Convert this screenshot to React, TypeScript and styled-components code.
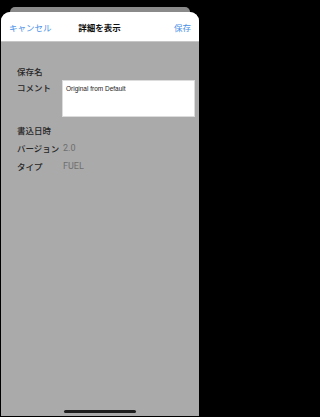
import React from 'react';
import styled, { createGlobalStyle } from 'styled-components';

const GlobalStyle = createGlobalStyle`
  html, body {
    margin: 0;
    padding: 0;
    background: #000;
  }
  body {
    font-family: 'Noto Sans CJK JP', 'Noto Sans', sans-serif;
  }
`;

const Screen = styled.div`
  width: 200px;
  height: 417px;
  background: #000;
  display: flex;
  flex-direction: column;
  padding-top: 7px;
  box-sizing: border-box;
  overflow: hidden;
`;

const BackCard = styled.div`
  height: 5px;
  margin: 0 10px;
  background: #8a8a8a;
  border-radius: 7px 7px 0 0;
  flex-shrink: 0;
`;

const Sheet = styled.div`
  flex: 1;
  margin: 0 1px 1px;
  background: #aaaaaa;
  border-radius: 9px 9px 0 0;
  overflow: hidden;
  display: flex;
  flex-direction: column;
`;

const NavBar = styled.div`
  height: 30px;
  box-sizing: border-box;
  background: #fff;
  border-bottom: 1px solid #c6c6c6;
  display: grid;
  grid-template-columns: 1fr auto 1fr;
  align-items: center;
  padding: 2px 8px 0 8px;
  flex-shrink: 0;
`;

const NavButton = styled.span<{ $align: 'left' | 'right' }>`
  font-size: 8.5px;
  color: #4a90e8;
  justify-self: ${(p) => (p.$align === 'left' ? 'start' : 'end')};
  line-height: 1;
`;

const NavTitle = styled.span`
  font-size: 8.5px;
  font-weight: 700;
  color: #111;
  line-height: 1;
  margin-right: 1px;
`;

const Content = styled.div`
  flex: 1;
  display: flex;
  flex-direction: column;
  padding: 25px 4px 0 16px;
  gap: 9px;
`;

const Row = styled.div<{ $top?: number }>`
  display: flex;
  align-items: flex-start;
  margin-top: ${(p) => p.$top ?? 0}px;
`;

const Label = styled.span`
  width: 45px;
  flex-shrink: 0;
  font-size: 8.5px;
  font-weight: 500;
  color: #262626;
  line-height: 9px;
  white-space: nowrap;
`;

const Value = styled.span`
  margin-left: 1px;
  font-size: 9px;
  color: #6e6e6e;
  line-height: 9px;
  font-family: 'Roboto', 'Noto Sans', sans-serif;
`;

const Comment = styled.div`
  flex: 1;
  height: 37px;
  margin-top: -3px;
  box-sizing: border-box;
  background: #fff;
  border: 1px solid #dcdcdc;
  padding: 4px 3px;
  font-family: 'Liberation Sans', Arial, sans-serif;
  font-size: 6.5px;
  color: #222;
  line-height: 1.2;
`;

const HomeBar = styled.div`
  width: 72px;
  height: 3px;
  border-radius: 2px;
  background: #1e1e1e;
  align-self: center;
  margin: auto 0 3px -12px;
`;

export default function App() {
  return (
    <>
      <GlobalStyle />
      <Screen>
        <BackCard />
        <Sheet>
          <NavBar>
            <NavButton $align="left">キャンセル</NavButton>
            <NavTitle>詳細を表示</NavTitle>
            <NavButton $align="right">保存</NavButton>
          </NavBar>
          <Content>
            <Row>
              <Label>保存名</Label>
            </Row>
            <Row $top={-2}>
              <Label>コメント</Label>
              <Comment>Original from Default</Comment>
            </Row>
            <Row>
              <Label>書込日時</Label>
            </Row>
            <Row>
              <Label>バージョン</Label>
              <Value>2.0</Value>
            </Row>
            <Row>
              <Label>タイプ</Label>
              <Value>FUEL</Value>
            </Row>
            <HomeBar />
          </Content>
        </Sheet>
      </Screen>
    </>
  );
}
